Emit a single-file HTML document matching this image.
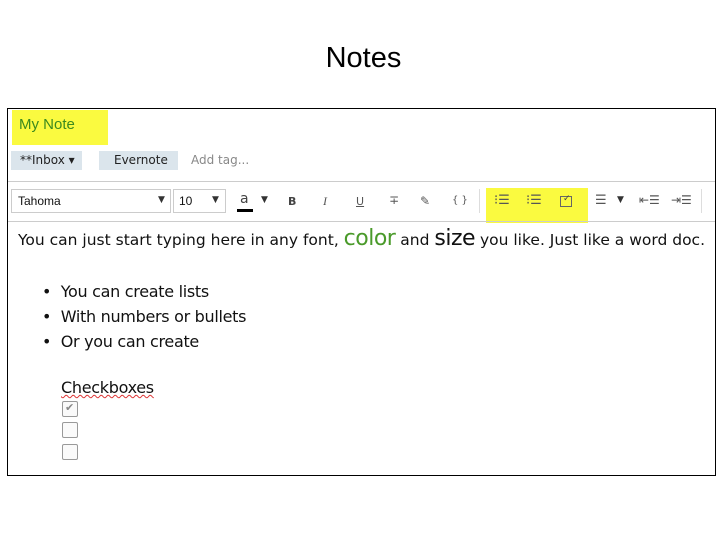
<!DOCTYPE html>
<html><head><meta charset="utf-8"><style>
*{margin:0;padding:0;box-sizing:border-box}
body{width:720px;height:540px;background:#fff;position:relative;font-family:"DejaVu Sans","Liberation Sans",sans-serif;overflow:hidden}
.a{position:absolute}
.t{font-size:29px;color:#000;left:0;width:727px;text-align:center;top:42px;font-family:"Liberation Sans",sans-serif}
.frame{left:7px;top:108px;width:709px;height:368px;border:1px solid #000}
.cb{position:absolute;left:62px;width:16px;height:16px;border:1px solid #999;border-radius:2px;background:#fafafa}
</style></head><body>
<div class="a t">Notes</div>
<div class="a frame"></div>
<div class="a" style="left:12px;top:110px;width:96px;height:35px;background:#fafa40"></div>
<div class="a" style="left:19px;top:116px;font-size:15px;color:#3c8a1e;font-family:'Liberation Sans',sans-serif">My Note</div>
<div class="a" style="left:11px;top:151px;width:71px;height:19px;background:#dbe5ec"></div>
<div class="a" style="left:20px;top:153px;font-size:12px;color:#222">**Inbox ▾</div>
<div class="a" style="left:99px;top:151px;width:79px;height:19px;background:#dbe5ec"></div>
<div class="a" style="left:114px;top:153px;font-size:12px;color:#222">Evernote</div>
<div class="a" style="left:191px;top:153px;font-size:12px;color:#888">Add tag...</div>
<div class="a" style="left:8px;top:181px;width:707px;height:1px;background:#ccc"></div>
<div class="a" style="left:11px;top:189px;width:160px;height:24px;border:1px solid #ccc"></div>
<div class="a" style="left:18px;top:194px;font-size:12px;color:#111;font-family:'Liberation Sans',sans-serif">Tahoma</div>
<div class="a" style="left:158px;top:195px;font-size:9px;color:#333">▼</div>
<div class="a" style="left:173px;top:189px;width:53px;height:24px;border:1px solid #ccc"></div>
<div class="a" style="left:179px;top:194px;font-size:12px;color:#111;font-family:'Liberation Sans',sans-serif">10</div>
<div class="a" style="left:212px;top:195px;font-size:9px;color:#333">▼</div>
<div class="a" style="left:240px;top:191px;font-size:14px;color:#444">a</div>
<div class="a" style="left:237px;top:209px;width:16px;height:3px;background:#000"></div>
<div class="a" style="left:261px;top:195px;font-size:9px;color:#333">▼</div>
<div class="a" style="left:288px;top:195px;font-size:11px;font-weight:bold;color:#444">B</div>
<div class="a" style="left:323px;top:194px;font-size:12px;font-style:italic;color:#555;font-family:'Liberation Serif',serif">I</div>
<div class="a" style="left:356px;top:195px;font-size:11px;color:#555;text-decoration:underline">U</div>
<div class="a" style="left:389px;top:193px;font-size:12px;color:#555">∓</div>
<div class="a" style="left:420px;top:194px;font-size:12px;color:#555">✎</div>
<div class="a" style="left:452px;top:195px;font-size:10px;color:#555">{ }</div>
<div class="a" style="left:479px;top:189px;width:1px;height:24px;background:#ddd"></div>
<div class="a" style="left:486px;top:188px;width:102px;height:35px;background:#fafa40"></div>
<div class="a" style="left:494px;top:193px;font-size:13px;color:#555">⁝☰</div>
<div class="a" style="left:526px;top:193px;font-size:13px;color:#555">⁝☰</div>
<div class="a" style="left:560px;top:196px;width:12px;height:11px;border:1px solid #666"></div>
<div class="a" style="left:563px;top:194px;font-size:9px;color:#444">✓</div>
<div class="a" style="left:595px;top:193px;font-size:13px;color:#555">☰</div>
<div class="a" style="left:617px;top:195px;font-size:9px;color:#333">▼</div>
<div class="a" style="left:639px;top:193px;font-size:12px;color:#555">⇤☰</div>
<div class="a" style="left:671px;top:193px;font-size:12px;color:#555">⇥☰</div>
<div class="a" style="left:701px;top:189px;width:1px;height:24px;background:#ddd"></div>
<div class="a" style="left:8px;top:221px;width:707px;height:1px;background:#ccc"></div>
<div class="a" style="left:18px;top:226px;font-size:15.5px;color:#111;white-space:nowrap;letter-spacing:0px">You can just start typing here in any font, <span style="color:#4a9a2a;font-size:22px;letter-spacing:-0.5px">color</span> and <span style="font-size:22px;letter-spacing:-0.5px">size</span> you like. Just like a word doc.</div>
<div class="a" style="left:42px;top:279px;font-size:16px;line-height:25px;color:#111;letter-spacing:-0.3px">
<div>• &nbsp;You can create lists</div><div>• &nbsp;With numbers or bullets</div><div>• &nbsp;Or you can create</div></div>
<div class="a" style="left:61px;top:378px;font-size:16px;color:#111;letter-spacing:-0.3px;text-decoration:underline wavy #d33;text-decoration-thickness:1px">Checkboxes</div>
<div class="cb" style="top:401px"></div><div class="a" style="left:65px;top:401px;font-size:11px;color:#888">✔</div>
<div class="cb" style="top:422px"></div>
<div class="cb" style="top:444px"></div>
</body></html>
